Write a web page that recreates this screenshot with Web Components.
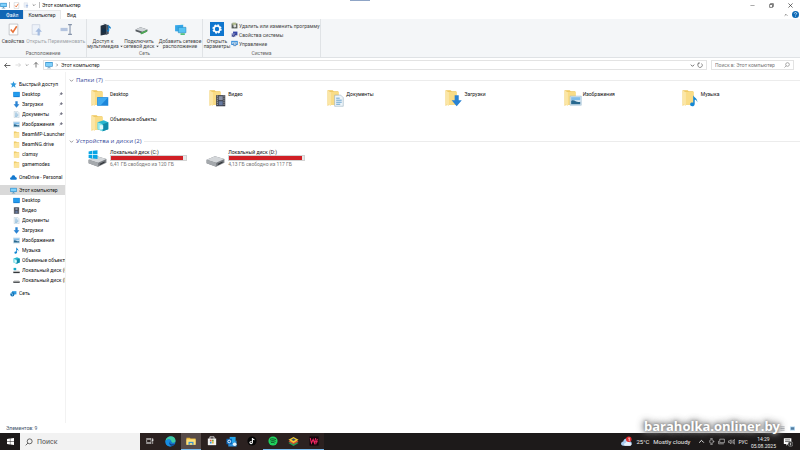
<!DOCTYPE html>
<html lang="ru">
<head>
<meta charset="utf-8">
<title>Этот компьютер</title>
<style>
html,body{margin:0;height:100%}
body{font:5px/6px Roboto,"Noto Sans",sans-serif;color:#222;background:#fff;overflow:hidden}
</style>
</head>
<body>
<desktop-screen></desktop-screen>
<script>
const folder = '<path d="M1 2h9l2 2h8v24H4l-3 2z" fill="#eec65c"/><path d="M5 5h16v23H5z" fill="#f9dc86"/><path d="M1 2l6 4v24l-6-3z" fill="#fbe6a6"/>';
const screen = '<path d="M1 3h22v17H1z" fill="#1c86da"/><path d="M2 4h20L8 19H2z" fill="#3faaf0"/>';
const doc = '<path d="M4 1h12l5 5v17H4z" fill="#eef5fa" stroke="#8aa3b5"/><path d="M7 7h7M7 11h11M7 15h11M7 19h8" stroke="#4a90c2" stroke-width="1.6"/>';
const video = '<path d="M3 1h18v22H3z" fill="#3b3f4a"/><path d="M8 3h8v8H8z" fill="#8b93a8"/><path d="M8 13h8v8H8z" fill="#6679a0"/><path d="M5.500 2v20M18.500 2v20" stroke="#ddd" stroke-width="1.600" stroke-dasharray="2 2"/>';
const down = '<path d="M8 1h8v10h6L12 23 2 11h6z" fill="#2a83d3"/>';
const image = '<path d="M1 3h22v18H1z" fill="#dcebf5" stroke="#8fb2ca"/><path d="M3 5h18v6H3z" fill="#81bdea"/><path d="M3 19v-7c7-4 10 5 18 2v5z" fill="#27688f"/>';
const music = '<path d="M11 1c2 5 9 6 8 14-1-4-3-5-5-5v8c0 7-10 6-9 1 0-3 3-4 6-3z" fill="#1487d4"/>';
const cube = '<path d="M2 5l12-4 9 4v14l-11 4-10-4z" fill="#28b7cf"/><path d="M2 5l10 4v14L2 19z" fill="#8ce6ee"/><path d="M12 9l11-4v14l-11 4z" fill="#108aa9"/><path d="M6 11h7v8H6z" fill="#e2fbfc"/>';
const disk = '<path d="M1 18l14-6 16 5v6l-14 7-16-6z" fill="#777b80"/><path d="M1 18l14-6 16 5-14 6z" fill="#d4d7da"/><path d="M1 18l16 5v7L1 24z" fill="#a5a9ad"/><path d="M20 26l8-4" stroke="#303438" stroke-width="2"/>';
const winlogo = '<path d="M1 4l6-1v6H1zM8 3l8-1v7H8zM1 10h6v6l-6-1zM8 10h8v7l-8-1z" fill="#08a5e5"/>';
const over = s => `<g transform="translate(10 10) scale(.9)">${s}</g>`;
const ICONS = {
 pc:['0 0 24 24','<path d="M1 3h22v14H1z" fill="#2387c9"/><path d="M3 5h18v10H3z" fill="#7fd0fa"/><path d="M10 17h4v3h4v2H6v-2h4z" fill="#6d9dbd"/>'],
 desktop:['0 0 24 24','<path d="M1 3h22v18H1z" fill="#147bd1"/><path d="M2 4h20v14H2z" fill="#239ced"/>'],
 doc:['0 0 24 24',doc], video:['0 0 24 24',video], down:['0 0 24 24',down], image:['0 0 24 24',image], music:['0 0 24 24',music], cube:['0 0 24 24',cube],
 folder:['0 0 24 24','<path d="M3 2h8l2 2h8v18H3z" fill="#edc85e"/><path d="M5 6h16v16H3z" fill="#fce49b"/>'],
 star:['0 0 24 24','<path d="M12 1l3 7 8 1-6 5 2 9-7-5-7 5 2-9-6-5 8-1z" fill="#2f99dd"/>'],
 cloud:['0 0 24 24','<path d="M5 20C-2 20-1 11 5 11c1-9 13-8 13-1 7 0 7 10 1 10z" fill="#1479cf"/>'],
 net:['0 0 24 24','<path d="M7 4h15v11H7z" fill="#2d9ae0"/><circle cx="8" cy="15" r="7" fill="#1772b5"/><path d="M3 13c4-5 7 2 5 6" stroke="#8bd5f4" stroke-width="3" fill="none"/>'],
 sdisk:['0 0 24 24','<path d="M1 15h22v5H1z" fill="#33373a"/><path d="M4 12h16l3 3H1z" fill="#bbb"/>'],
 sdiskc:['0 0 24 24','<path d="M1 16h22v5H1z" fill="#33373a"/><path d="M4 13h16l3 3H1z" fill="#bbb"/><path d="M2 3h9v8H2z" fill="#15a9c9"/>'],
 pin:['0 0 12 12','<path d="M7 1l4 4-2 1-2 3-4-4 3-2zM4 7l-3 4" fill="#778" stroke="#667"/>'],
 drop:['0 0 12 12','<path d="M1 3h10L6 9z" fill="#444"/>'],
 fDesktop:['0 0 32 32',folder+over('<g transform="translate(0 2)">'+screen+'</g>')], fVideo:['0 0 32 32',folder+over(video)], fDoc:['0 0 32 32',folder+over(doc)], fDown:['0 0 32 32',folder+over(down)], fImage:['0 0 32 32',folder+over(image)], fMusic:['0 0 32 32',folder+over(music)], fCube:['0 0 32 32',folder+over(cube)],
 diskC:['0 0 32 32',disk+winlogo], diskD:['0 0 32 32',disk],
 props:['0 0 24 24','<path d="M4 2h16v20H4z" fill="#fff" stroke="#9b9fa5"/><path d="M7 12l4 5 7-11" fill="none" stroke="#e8733a" stroke-width="3"/>'],
 open:['0 0 24 24','<path d="M4 3h14v18H4z" fill="#edf2f9" stroke="#bdc8d8"/><path d="M14 23v-7h-4l6-7 6 7h-4v7z" fill="#a5bce0"/>'],
 rename:['0 0 24 24','<path d="M1 9h13v6H1z" fill="#b4c4df"/><path d="M15 3h7M15 21h7M18.500 3v18" stroke="#8593aa" stroke-width="2"/>'],
 media:['0 0 24 24','<path d="M3 5l10-3v19L3 23z" fill="#22303f"/><path d="M8 1l10 3v16l-5 2V5z" fill="#4a5663"/><circle cx="9" cy="14" r="4" fill="#142f48"/><path d="M17 2c0 4 6 4 5 9-1-2-2-2-3-2v5c-1 4-6 2-4-1l2-1z" fill="#1681cd"/>'],
 mapdisk:['0 0 24 24','<path d="M1 12l9-4 13 4v3l-9 5-13-5z" fill="#555b60"/><path d="M1 12l9-4 13 4-9 4z" fill="#d0d4d8"/><path d="M10 18l12-5v3l-11 5z" fill="#4dac55"/>'],
 netadd:['0 0 24 24','<path d="M2 4l15-1v13L2 15z" fill="#36a7e8"/><path d="M8 8h14v10H8z" fill="#56c2f3" stroke="#1683bd"/><path d="M12 19h8v3h-8z" fill="#45ba70"/>'],
 gear:['0 0 24 24','<path d="M0 0h24v24H0z" fill="#0f76ce"/><circle cx="12" cy="12" r="6.500" fill="none" stroke="#fff" stroke-width="3" stroke-dasharray="3 2.100"/><circle cx="12" cy="12" r="5" fill="none" stroke="#fff" stroke-width="2.500"/>'],
 uninst:['0 0 24 24','<path d="M2 5h20v17H2z" fill="#59605a"/><path d="M5 2h12v9H5z" fill="#afba8d"/><circle cx="13" cy="14" r="5" fill="#ddd"/>'],
 sys:['0 0 24 24','<path d="M7 2h15v13H7z" fill="#3646a5"/><path d="M2 8h13v12H2z" fill="#7a82bd"/><path d="M4 15l4 4 8-9" fill="none" stroke="#242d71" stroke-width="3"/>'],
 manage:['0 0 24 24','<path d="M1 3h22v14H1z" fill="#2381d6"/><path d="M4 6h16v8H4z" fill="#b8dcf7"/><path d="M8 9h10v12H8z" fill="#5e91c4"/><path d="M10 12h6M10 16h6" stroke="#fff" stroke-width="2"/>'],
 min:['0 0 12 12','<path d="M1 6h10" stroke="#333"/>'],
 max:['0 0 12 12','<path d="M1.500 3.500h7v7h-7zM3.500 3V1.500h7v7H9" fill="none" stroke="#333" stroke-width="1.500"/>'],
 close:['0 0 12 12','<path d="M1 1l10 10M11 1L1 11" stroke="#222" stroke-width="1.500"/>'],
 help:['0 0 12 12','<circle cx="6" cy="6" r="6" fill="#0d69b5"/><path d="M4 4.500c0-2.500 4-2.500 4 0C8 6 6 5.500 6 7.500M6 9v1" stroke="#fff" fill="none" stroke-width="1.200"/>'],
 left:['0 0 12 12','<path d="M11 6H1M5 2L1 6l4 4" fill="none" stroke="#444" stroke-width="1.400"/>'],
 right:['0 0 12 12','<path d="M1 6h10M7 2l4 4-4 4" fill="none" stroke="#bbb"/>'],
 up:['0 0 12 12','<path d="M6 11V1M2 5l4-4 4 4" fill="none" stroke="#444" stroke-width="1.400"/>'],
 chev:['0 0 12 12','<path d="M2 4l4 4 4-4" fill="none" stroke="currentColor" stroke-width="1.600"/>'],
 chevup:['0 0 12 12','<path d="M2 8l4-4 4 4" fill="none" stroke="currentColor" stroke-width="1.600"/>'],
 next:['0 0 12 12','<path d="M4 2l4 4-4 4" fill="none" stroke="currentColor" stroke-width="1.400"/>'],
 refresh:['0 0 12 12','<path d="M9 3a4.500 4.500 0 1 1-5-.500M4 0v3.500H1" fill="none" stroke="#555" stroke-width="1.300"/>'],
 find:['0 0 12 12','<circle cx="7" cy="5" r="3.700" fill="none" stroke="currentColor" stroke-width="1.200"/><path d="M4.500 7.500L1 11" stroke="currentColor" stroke-width="1.200"/>'],
 win:['0 0 12 12','<path d="M0 1.500l5-.7v4.700H0zM5.700.700L12 0v5.500H5.700zM0 6.300h5V11l-5-.7zM5.700 6.300H12V12l-6.300-.8z" fill="#fff"/>'],
 task:['0 0 24 24','<path d="M2 7h13v10H2zM2 3v2h13V3M2 21v-2h13v2M20 3v18" fill="none" stroke="#ddd" stroke-width="2"/><path d="M18 7h4v5h-4z" fill="#ddd"/>'],
 edge:['0 0 24 24','<circle cx="12" cy="12" r="11" fill="#1376cb"/><path d="M1 11C3-3 23-2 23 10c0 6-8 6-9 2 0-6-9-6-13-1z" fill="#3fc9a2"/><path d="M1 11c5-6 11-4 12-1-5 1-5 9 2 12C5 25 0 18 1 11z" fill="#168ce1"/><path d="M10 13c0 6 8 6 12 4-4 7-15 5-12-4z" fill="#123e83"/>'],
 explorer:['0 0 24 24','<path d="M1 4h8l2 2h12v15H1z" fill="#e9b73e"/><path d="M1 8h22v13H1z" fill="#ffe07a"/><path d="M6 14h12v7H6z" fill="#3a92d0"/><path d="M9 17h6v4H9z" fill="#ffe07a"/>'],
 store:['0 0 24 24','<path d="M7 7V2h10v5" fill="none" stroke="#f1f1f1" stroke-width="2"/><path d="M2 6h20v16H2z" fill="#f1f1f1"/><path d="M7 9h4v4H7z" fill="#ef5739"/><path d="M12 9h4v4h-4z" fill="#73ae38"/><path d="M7 14h4v4H7z" fill="#2999d8"/><path d="M12 14h4v4h-4z" fill="#e8b82f"/>'],
 outlook:['0 0 24 24','<path d="M8 2h13v14H8z" fill="#26a5e9"/><path d="M5 10l9 6 9-6v13H5z" fill="#2c8fdb"/><path d="M1 6h12v12H1z" fill="#0867ba"/><circle cx="7" cy="12" r="3" fill="none" stroke="#fff" stroke-width="2"/><circle cx="19" cy="18" r="4" fill="#e4f4fb"/>'],
 tiktok:['0 0 24 24','<circle cx="12" cy="12" r="11" fill="#050505"/><path d="M13 5v10c0 5-7 4-6 0 1-2 3-2 4-2M13 5c1 3 3 4 5 4" fill="none" stroke="#f5f5f5" stroke-width="2.600"/>'],
 spotify:['0 0 24 24','<circle cx="12" cy="12" r="11" fill="#1fd45e"/><path d="M5 8c5-2 10-1 14 1M6 12c4-1 8-1 12 1M7 16c3-1 6-1 9 1" fill="none" stroke="#10331c" stroke-width="2"/>'],
 stacks:['0 0 24 24','<path d="M1 15l11-6 11 6-11 7z" fill="#249e51"/><path d="M1 12l11-6 11 6-11 6z" fill="#d64834"/><path d="M1 8l11-6 11 6-11 7z" fill="#f4c932"/><path d="M7 8l5-3 5 3-5 3z" fill="#34536d"/>'],
 game:['0 0 24 24','<path d="M1 1h22v22H1z" fill="#14060b"/><path d="M3 5l3 12 4-9 3 9 3-12M14 14h7M20 7l-4 13" fill="none" stroke="#f12764" stroke-width="2.500"/>'],
 weather:['0 0 24 24','<path d="M5 21C-2 21-1 12 5 12c1-9 13-8 13-1 7 0 7 10 1 10z" fill="#a9cdf1"/><path d="M10 21c-5 0-4-6 0-6 2-6 9-4 9 0 5 0 5 6 0 6z" fill="#e7f1fb"/><circle cx="17" cy="7" r="6" fill="#e22d30"/><path d="M16 5l2-1v7" fill="none" stroke="#fff" stroke-width="1.500"/>'],
 meet:['0 0 12 12','<rect x="3" y="3" width="6" height="6" rx="2" fill="none" stroke="#ddd"/><path d="M9 6h2M4 1h4M4 11h4" fill="none" stroke="#ddd"/>'],
 monitor:['0 0 12 12','<path d="M3 2h8v6H3zM5 10h5M1 5v5h4" fill="none" stroke="#ddd"/>'],
 sound:['0 0 12 12','<path d="M1 5h2l2-2v7L3 8H1zM7 4v5M9 3q2 3 0 7M11 2q2 4 0 9" fill="none" stroke="#ddd"/>'],
 notice:['0 0 24 24','<path d="M2 3h18v14h-8l-4 4v-4H2z" fill="#fff"/><path d="M5 7h12M5 11h12" stroke="#555" stroke-width="2"/><circle cx="18" cy="17" r="6" fill="#333" stroke="#bbb"/><path d="M18 14v6" stroke="#fff" stroke-width="1.500"/>'],
 list:['0 0 12 12','<path d="M1 2h10M1 6h10M1 10h10" stroke="#9ba0a8" stroke-width="2"/>'],
 tiles:['0 0 12 12','<path d="M0 1h12v10H0z" fill="#b9dcf4"/><path d="M2 3h8v6H2z" fill="#527ca0"/>']
};
const BASE = `*{box-sizing:border-box}button,input{font:inherit;color:inherit;border:0;background:none;padding:0;margin:0;min-width:0;outline:0}a{color:inherit;text-decoration:none}`;
const define = (tag, css, html) => customElements.define(tag, class extends HTMLElement {
  connectedCallback(){
    if(this.shadowRoot) return;
    const root = this.attachShadow({mode:'open'});
    const t = document.createElement('template');
    t.innerHTML = `<style>${BASE}${css}</style>` + (typeof html === 'function' ? html(this) : html);
    root.append(t.content.cloneNode(true));
  }
});
const ic = (n, s=7) => `<ui-icon name="${n}" size="${s}"></ui-icon>`;

define('ui-icon', ':host{display:block;flex:none}svg{display:block}', el => {
  const [box, body] = ICONS[el.getAttribute('name')], s = el.getAttribute('size') || 7;
  return `<svg width="${s}" height="${s}" viewBox="${box}" aria-hidden="true">${body}</svg>`;
});

define('title-bar', `:host{display:flex;height:10px;align-items:center;background:#fff}
.t{margin-left:2px;color:#111}.q{color:#aaa;display:flex;gap:3px;align-items:center;padding-left:2px}.sp{flex:1}button{width:19px;display:grid;place-items:center}i{width:1px;height:6px;background:#bbb}.c{color:#333}.tab{width:20px;height:1px;background:#8fa5c6;position:absolute;left:350px;top:0}`,
 `${ic('pc',7)}<span class="q"><i></i>${ic('props',7)}${ic('open',6)}<span class="c">${ic('chev',4)}</span><i></i></span><span class="t">Этот компьютер</span><span class="sp"></span><span class="tab"></span>
 <button aria-label="Свернуть">${ic('min',5)}</button><button aria-label="Восстановить">${ic('max',5)}</button><button aria-label="Закрыть">${ic('close',5)}</button>`);

define('ribbon-tabs', `:host{display:flex;height:9px;background:#fff}
button{padding:0 6px;white-space:nowrap}.file{background:#1166b5;color:#fff;width:23px}.on{background:#f4f6f8;border:1px solid #e5e7e9;border-bottom:0;width:38px;padding:0}.r{margin-left:auto;display:flex;gap:4px;align-items:center;padding-right:1px}.r button{padding:0}`,
 `<button class="file">Файл</button><button class="on">Компьютер</button><button>Вид</button><span class="r"><button aria-label="Свернуть ленту">${ic('chevup',4)}</button><button aria-label="Справка">${ic('help',7)}</button></span>`);

define('ribbon-button', `:host{display:block;flex:none}button{width:100%;display:flex;flex-direction:column;align-items:center;line-height:5px;text-align:center;white-space:nowrap;color:#444}
.i{height:16px;display:grid;place-items:center;margin-bottom:2px}.l{display:flex;align-items:flex-end;gap:1px}.l ui-icon{padding-bottom:1px}:host([off]) button{color:#a0a4a8}`,
 el => `<button><span class="i">${ic(el.getAttribute('icon'), el.getAttribute('size')||13)}</span><span class="l"><span><slot></slot></span>${el.hasAttribute('menu')?ic('drop',3):''}</span></button>`);

define('ribbon-group', `:host{display:flex;flex-direction:column;border-right:1px solid #e0e3e6;flex:none}
.b{display:flex;flex:1;padding-top:2px}.l{text-align:center;color:#666;height:7px}`,
 el => `<div class="b"><slot></slot></div><div class="l">${el.getAttribute('label')}</div>`);

define('ribbon-bar', `:host{display:flex;height:39px;background:#f4f6f8;border-bottom:1px solid #dfe2e5}
.g1{width:87px}.g2{width:116px}.g3{width:118px}
.w21{width:21px}.w26{width:26px}.w28{width:28px}.w36{width:36px}.w39{width:39px}.w42{width:42px}
.col{display:flex;flex-direction:column;gap:2px;padding-top:1px}.col button{display:flex;align-items:center;gap:1px;height:7px;color:#444;white-space:nowrap}`,
 `<ribbon-group class="g1" label="Расположение"><ribbon-button class="w26" icon="props">Свойства</ribbon-button><ribbon-button class="w21" icon="open" off>Открыть</ribbon-button><ribbon-button class="w39" icon="rename" off>Переименовать</ribbon-button></ribbon-group>
 <ribbon-group class="g2" label="Сеть"><ribbon-button class="w36" icon="media" menu>Доступ к<br>мультимедиа</ribbon-button><ribbon-button class="w36" icon="mapdisk" menu>Подключить<br>сетевой диск</ribbon-button><ribbon-button class="w42" icon="netadd">Добавить сетевое<br>расположение</ribbon-button></ribbon-group>
 <ribbon-group class="g3" label="Система"><ribbon-button class="w28" icon="gear" size="14">Открыть<br>параметры</ribbon-button><div class="col"><button>${ic('uninst',7)}Удалить или изменить программу</button><button>${ic('sys',7)}Свойства системы</button><button>${ic('manage',7)}Управление</button></div></ribbon-group>`);

define('address-bar', `:host{display:flex;height:14px;align-items:center;padding:0 6px 0 4px;gap:4px;background:#fff;color:#555}
.nav{display:flex;gap:4px;align-items:center}.nav button{display:block}.path,.s{display:flex;align-items:center;height:10px;border:1px solid #e3e3e3}
.path{flex:1;gap:2px;padding:0 3px 0 1px;color:#222}.path a{flex:1}.s{width:83px;padding:0 3px;color:#777}.s input{flex:1;width:60px}input::placeholder{color:#777;opacity:1}`,
 `<span class="nav"><button aria-label="Назад">${ic('left',7)}</button><button aria-label="Вперёд">${ic('right',6)}</button><button aria-label="История">${ic('chev',4)}</button><button aria-label="Вверх">${ic('up',6)}</button></span>
 <span class="path">${ic('pc',8)}${ic('next',4)}<a href="#">Этот компьютер</a><button aria-label="Список">${ic('chev',5)}</button><button aria-label="Обновить">${ic('refresh',6)}</button></span>
 <label class="s"><input type="search" aria-label="Поиск" placeholder="Поиск в: Этот компьютер">${ic('find',6)}</label>`);

define('tree-item', `:host{display:block}a{display:flex;align-items:center;height:10px;gap:2px;padding-left:13px;white-space:nowrap;overflow:hidden;color:#111}
:host([top]) a{padding-left:10px}:host([sel]) a{background:#d9d9d9}.n{flex:1;overflow:hidden}a>ui-icon:last-child{margin-right:2px}`,
 el => `<a href="#">${ic(el.getAttribute('icon'),7)}<span class="n"><slot></slot></span>${el.hasAttribute('pin')?ic('pin',4):''}</a>`);

define('nav-tree', `:host{display:flex;flex-direction:column;width:66px;flex:none;padding-top:7px;border-right:1px solid #f2f2f2}.g{margin-bottom:3px}`,
 `<div class="g"><tree-item top icon="star">Быстрый доступ</tree-item><tree-item pin icon="desktop">Desktop</tree-item><tree-item pin icon="down">Загрузки</tree-item><tree-item pin icon="doc">Документы</tree-item><tree-item pin icon="image">Изображения</tree-item><tree-item icon="folder">BeamMP-Launcher</tree-item><tree-item icon="folder">BeamNG.drive</tree-item><tree-item icon="folder">clamsy</tree-item><tree-item icon="folder">gamemodes</tree-item></div>
 <div class="g"><tree-item top icon="cloud">OneDrive - Personal</tree-item></div>
 <div class="g"><tree-item top sel icon="pc">Этот компьютер</tree-item><tree-item icon="desktop">Desktop</tree-item><tree-item icon="video">Видео</tree-item><tree-item icon="doc">Документы</tree-item><tree-item icon="down">Загрузки</tree-item><tree-item icon="image">Изображения</tree-item><tree-item icon="music">Музыка</tree-item><tree-item icon="cube">Объемные объекты</tree-item><tree-item icon="sdiskc">Локальный диск (C:)</tree-item><tree-item icon="sdisk">Локальный диск (D:)</tree-item></div>
 <div class="g"><tree-item top icon="net">Сеть</tree-item></div>`);

define('file-section', `:host{display:block}h2{display:flex;align-items:center;gap:2px;margin:0;font:6px/8px "Open Sans","Noto Sans",sans-serif;color:#36479a;white-space:nowrap}
h2::after{content:"";flex:1;height:1px;background:#ececec}h2 ui-icon{color:#666}.g{display:grid;grid-template-columns:repeat(6,minmax(0,1fr));padding:5px 0 0 22px}
:host([drives]) .g{padding:4px 3px 0 19px}`,
 el => `<h2>${ic('chev',5)}${el.getAttribute('label')}</h2><div class="g"><slot></slot></div>`);

define('folder-tile', `:host{display:block;height:25px}a{display:flex;gap:1px;color:#111;white-space:nowrap}span{padding-top:2px}`,
 el => `<a href="#">${ic(el.getAttribute('icon'),18)}<span><slot></slot></span></a>`);

define('drive-tile', `:host{display:block}a{display:flex;gap:3px;color:#111;white-space:nowrap}.c{width:77px;flex:none}
.bar{height:6px;border:1px solid #d2d2d2;background:#e8e8e8}.bar i{display:block;height:100%;background:#d01f25}.f{color:#777;line-height:7px}`,
 el => `<a href="#">${ic(el.getAttribute('icon'),19)}<span class="c"><div><slot></slot></div><div class="bar" role="meter" aria-label="Занято" aria-valuenow="${el.getAttribute('used')}"><i style="width:${el.getAttribute('used')}%"></i></div><div class="f">${el.getAttribute('free')}</div></span></a>`);

define('file-view', `:host{display:block;flex:1;min-width:0;padding:4px 0 0 3px}.f{height:61px}`,
 `<file-section class="f" label="Папки (7)"><folder-tile icon="fDesktop">Desktop</folder-tile><folder-tile icon="fVideo">Видео</folder-tile><folder-tile icon="fDoc">Документы</folder-tile><folder-tile icon="fDown">Загрузки</folder-tile><folder-tile icon="fImage">Изображения</folder-tile><folder-tile icon="fMusic">Музыка</folder-tile><folder-tile icon="fCube">Объемные объекты</folder-tile></file-section>
 <file-section drives label="Устройства и диски (2)"><drive-tile icon="diskC" used="96" free="6,41 ГБ свободно из 120 ГБ">Локальный диск (C:)</drive-tile><drive-tile icon="diskD" used="97" free="4,13 ГБ свободно из 117 ГБ">Локальный диск (D:)</drive-tile></file-section>`);

define('status-bar', `:host{display:flex;height:10px;align-items:center;padding:0 5px 0 6px;color:#3b5068}.r{margin-left:auto;display:flex;gap:5px}`,
 `<span>Элементов: 9</span><span class="r">${ic('list',5)}${ic('tiles',5)}</span>`);

define('task-bar', `:host{display:flex;height:17px;background:#1d1a1a;color:#eee}
button{display:grid;place-items:center}.st{width:20px}.s{width:120px;background:#f2f2f2;color:#444;display:flex;align-items:center;gap:4px;padding-left:5px;font-size:7px}.s input{width:90px}.s input::placeholder{color:#555;opacity:1}
.apps{display:flex;width:184px;background:#2b2120}.apps button{flex:1;border-bottom:1px solid transparent}.apps .run{border-color:#76b9ed}.apps .on{background:#574b49}
.tray{margin-left:auto;display:flex;align-items:center;padding-right:7px;gap:3px}.w{display:flex;gap:4px;align-items:center;font-size:6px;line-height:7px;margin-right:5px;white-space:nowrap}.clock{text-align:center;line-height:7px;padding-top:2px;margin-right:4px}`,
 `<button class="st" aria-label="Пуск">${ic('win',7)}</button><label class="s">${ic('find',8)}<input type="search" aria-label="Поиск в Windows" placeholder="Поиск"></label>
 <span class="apps">${[['task','',8],['edge','',11],['explorer','run on',10],['store','',10],['outlook','',11],['tiktok','',10],['spotify','run',10],['stacks','run',11],['game','run',10]].map(([n,c,s])=>`<button class="${c}" aria-label="${n}">${ic(n,s)}</button>`).join('')}</span>
 <span class="tray"><button class="w">${ic('weather',11)}<span>25°C</span><span>Mostly cloudy</span></button><button aria-label="Значки">${ic('chevup',7)}</button>${ic('meet',7)}${ic('monitor',7)}${ic('sound',7)}<button>РУС</button><time class="clock">14:29<br>05.08.2025</time><button aria-label="Уведомления">${ic('notice',10)}</button></span>`);

define('photo-mark', `:host{position:absolute;right:20px;bottom:16px;font:bold 13px/16px "Open Sans",sans-serif;color:#fff;text-shadow:0 0 3px #777,0 0 5px #888,0 0 8px #888,0 0 10px #999;pointer-events:none}`, `<slot></slot>`);

define('desktop-screen', `:host{display:flex;flex-direction:column;height:100vh;position:relative}main{display:flex;flex:1;min-height:0}`,
 `<title-bar></title-bar><ribbon-tabs></ribbon-tabs><ribbon-bar></ribbon-bar><address-bar></address-bar><main><nav-tree></nav-tree><file-view></file-view></main><status-bar></status-bar><task-bar></task-bar><photo-mark>baraholka.onliner.by</photo-mark>`);
</script>
</body>
</html>
